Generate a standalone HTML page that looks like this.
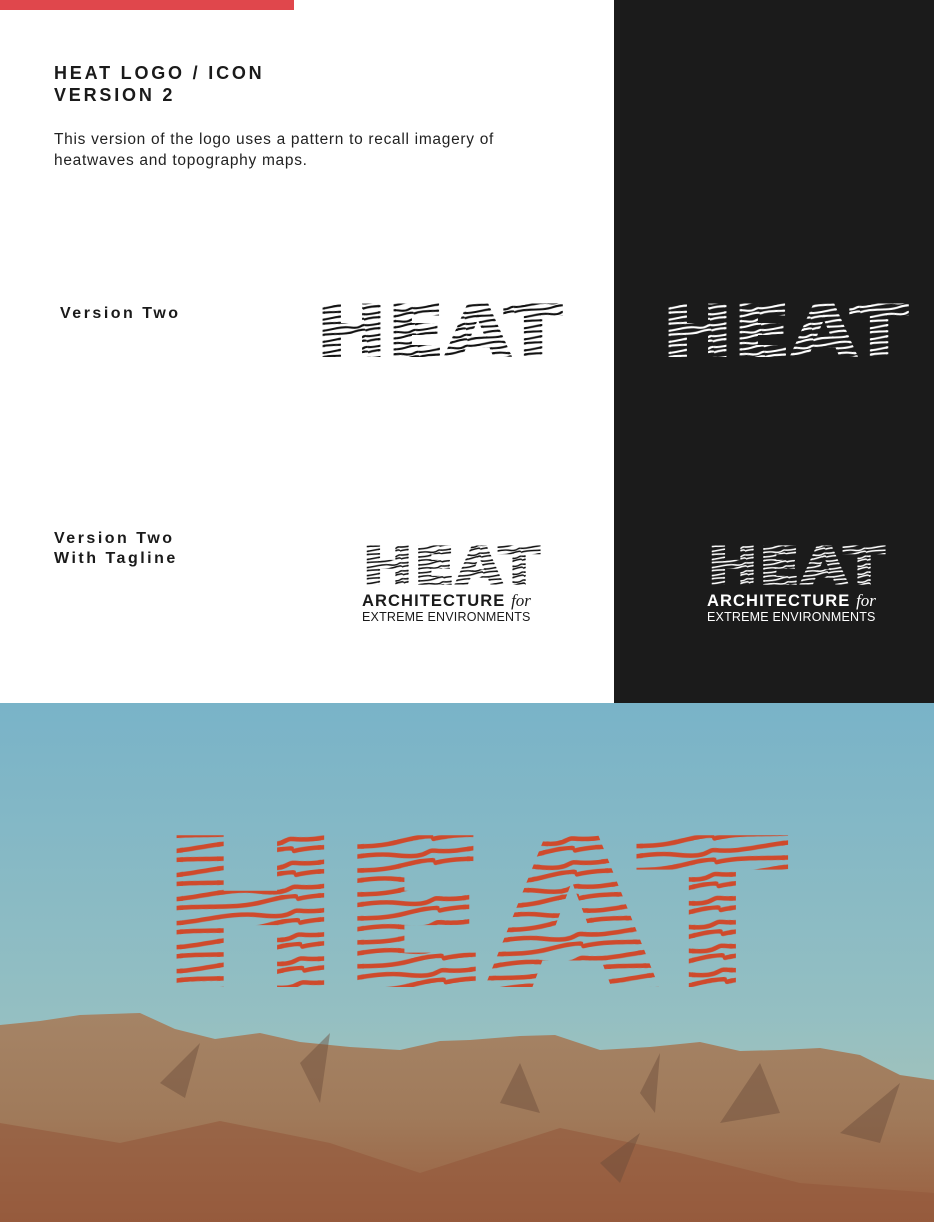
<!DOCTYPE html>
<html><head><meta charset="utf-8"><style>
*{margin:0;padding:0;box-sizing:border-box}
body{width:934px;height:1222px;position:relative;overflow:hidden;background:#fff;font-family:"Liberation Sans",sans-serif}
.bar{position:absolute;left:0;top:0;width:294px;height:10px;background:#e0474c}
.dark{position:absolute;left:614px;top:0;width:320px;height:703px;background:#1b1b1b}
h1{position:absolute;left:54px;top:62px;font-size:18px;line-height:22px;letter-spacing:2.8px;font-weight:bold;color:#1a1a1a}
p.d{position:absolute;left:54px;top:129px;font-size:15.5px;line-height:21px;color:#222;width:470px;letter-spacing:0.7px}
.lab{position:absolute;font-weight:bold;font-size:16px;letter-spacing:2.5px;line-height:20px;color:#1a1a1a}
.tag{position:absolute;text-align:left;white-space:nowrap}
.tag b{display:block;font-size:16.5px;letter-spacing:1.1px;line-height:17px}
.tag b i{font-family:"Liberation Serif",serif;font-weight:normal;font-size:17px;letter-spacing:0}
.tag span{display:block;font-size:12.5px;line-height:14px;letter-spacing:0.2px}
svg{position:absolute}
</style></head><body>
<div class="bar"></div>
<div class="dark"></div>
<h1>HEAT LOGO / ICON<br>VERSION 2</h1>
<p class="d">This version of the logo uses a pattern to recall imagery of heatwaves and topography maps.</p>
<div class="lab" style="left:60px;top:304px">Version Two</div>
<div class="lab" style="left:54px;top:529px">Version Two<br>With Tagline</div>

<svg width="0" height="0" style="position:absolute">
<defs>
<pattern id="pk" patternUnits="userSpaceOnUse" width="50" height="11" patternTransform="rotate(-7)">
<path d="M0 3 C12 0 25 5 37 3 S50 2 50 3 M0 8.5 C10 11 24 6 35 9 S46 7.5 50 8.5" stroke="#111" stroke-width="2.1" fill="none"/>
</pattern>
<pattern id="pw" patternUnits="userSpaceOnUse" width="50" height="11" patternTransform="rotate(-7)">
<path d="M0 3 C12 0 25 5 37 3 S50 2 50 3 M0 8.5 C10 11 24 6 35 9 S46 7.5 50 8.5" stroke="#fff" stroke-width="2.1" fill="none"/>
</pattern>
<pattern id="pks" patternUnits="userSpaceOnUse" width="40" height="8" patternTransform="rotate(-7)">
<path d="M0 2 C10 0 20 4 30 2 S40 1 40 2 M0 6 C8 8 19 4 28 6.5 S37 5 40 6" stroke="#111" stroke-width="1.5" fill="none"/>
</pattern>
<pattern id="pws" patternUnits="userSpaceOnUse" width="40" height="8" patternTransform="rotate(-7)">
<path d="M0 2 C10 0 20 4 30 2 S40 1 40 2 M0 6 C8 8 19 4 28 6.5 S37 5 40 6" stroke="#fff" stroke-width="1.5" fill="none"/>
</pattern>
<pattern id="pr" patternUnits="userSpaceOnUse" width="140" height="24" patternTransform="rotate(-5)">
<path d="M0 5 C35 0 70 11 105 5 S140 3 140 5 M0 17 C30 23 65 11 100 18 S130 15 140 17" stroke="#cf4a2c" stroke-width="4.5" fill="none" stroke-linecap="round"/>
</pattern>
</defs>
</svg>

<svg style="left:310px;top:290px" width="260" height="75"><text x="6" y="66" font-family="DejaVu Sans" font-weight="bold" font-size="70" textLength="246" lengthAdjust="spacingAndGlyphs" fill="url(#pk)" stroke="url(#pk)" stroke-width="2">HEAT</text></svg>
<svg style="left:656px;top:290px" width="260" height="75"><text x="6" y="66" font-family="DejaVu Sans" font-weight="bold" font-size="70" textLength="246" lengthAdjust="spacingAndGlyphs" fill="url(#pw)" stroke="url(#pw)" stroke-width="2">HEAT</text></svg>

<svg style="left:358px;top:538px" width="190" height="52"><text x="4" y="46" font-family="DejaVu Sans" font-weight="bold" font-size="52" textLength="178" lengthAdjust="spacingAndGlyphs" fill="url(#pks)" stroke="url(#pks)" stroke-width="1.5">HEAT</text></svg>
<svg style="left:703px;top:538px" width="190" height="52"><text x="4" y="46" font-family="DejaVu Sans" font-weight="bold" font-size="52" textLength="178" lengthAdjust="spacingAndGlyphs" fill="url(#pws)" stroke="url(#pws)" stroke-width="1.5">HEAT</text></svg>

<div class="tag" style="left:362px;top:592px;color:#1a1a1a"><b>ARCHITECTURE <i>for</i></b><span>EXTREME ENVIRONMENTS</span></div>
<div class="tag" style="left:707px;top:592px;color:#fff"><b>ARCHITECTURE <i>for</i></b><span>EXTREME ENVIRONMENTS</span></div>

<svg style="left:0;top:703px" width="934" height="519">
<defs>
<linearGradient id="sky" x1="0" y1="0" x2="0" y2="1">
<stop offset="0" stop-color="#79b3c8"/><stop offset="0.6" stop-color="#94bfc2"/><stop offset="1" stop-color="#b3c6b2"/>
</linearGradient>
<linearGradient id="mt" x1="0" y1="0" x2="0" y2="1">
<stop offset="0" stop-color="#a58466"/><stop offset="0.5" stop-color="#a07a5a"/><stop offset="1" stop-color="#9a5e3e"/>
</linearGradient>
</defs>
<rect width="934" height="519" fill="url(#sky)"/>
<path d="M0 322 L40 318 L80 312 L140 310 L175 326 L215 336 L260 330 L300 339 L350 344 L400 347 L440 338 L470 337 L520 333 L555 332 L600 347 L650 344 L700 339 L740 348 L780 347 L820 345 L860 352 L900 372 L934 377 L934 519 L0 519Z" fill="url(#mt)"/>
<path d="M0 420 L120 440 L220 418 L330 440 L420 470 L560 425 L680 450 L800 480 L934 490 L934 519 L0 519Z" fill="#94583c" opacity="0.6"/>
<path d="M160 380 L200 340 L185 395Z M300 360 L330 330 L320 400Z M500 400 L520 360 L540 410Z M640 390 L660 350 L655 410Z M720 420 L760 360 L780 410Z M840 430 L900 380 L880 440Z M600 460 L640 430 L620 480Z" fill="#6b4c3a" opacity="0.45"/>
<text x="160" y="281" font-family="DejaVu Sans" font-weight="bold" font-size="200" textLength="626" lengthAdjust="spacingAndGlyphs" fill="url(#pr)" stroke="url(#pr)" stroke-width="6">HEAT</text>
</svg>
</body></html>
